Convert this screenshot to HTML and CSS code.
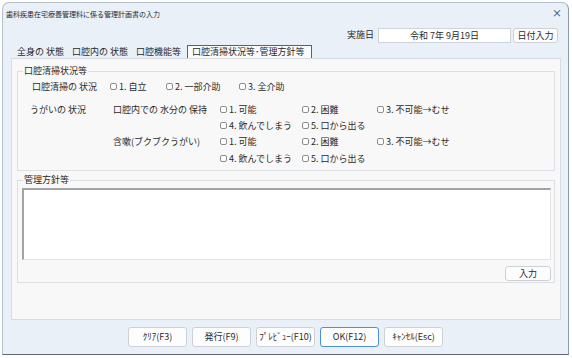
FILE: index.html
```html
<!DOCTYPE html>
<html lang="ja">
<head>
    <meta charset="UTF-8">
    <title>歯科疾患在宅療養管理料に係る管理計画書の入力</title>
    <link rel="stylesheet" href="styles.css">
</head>
<body>
    <div class="window">
        <div class="titlebar">
            <span class="title">歯科疾患在宅療養管理料に係る管理計画書の入力</span>
            <span class="close">×</span>
        </div>
        <div class="date-row">
            <span class="date-label">実施日</span>
            <div class="date-box">令和 7年 9月19日</div>
            <button class="btn date-btn">日付入力</button>
        </div>
        <div class="tabs">
            <span class="tab">全身の 状態</span>
            <span class="tab">口腔内の 状態</span>
            <span class="tab">口腔機能等</span>
            <span class="tab active">口腔清掃状況等･管理方針等</span>
        </div>
        <div class="panel">
            <fieldset class="group group-clean">
                <legend>口腔清掃状況等</legend>
                <div class="row-first">
                    <span class="row-label">口腔清掃の 状況</span>
                    <label class="opt w56"><span class="cb"></span>1. 自立</label>
                    <label class="opt w73"><span class="cb"></span>2. 一部介助</label>
                    <label class="opt"><span class="cb"></span>3. 全介助</label>
                </div>
                <div class="grid">
                    <span>うがいの 状況</span>
                    <span>口腔内での 水分の 保持</span>
                    <label class="opt"><span class="cb"></span>1. 可能</label>
                    <label class="opt"><span class="cb"></span>2. 困難</label>
                    <label class="opt"><span class="cb"></span>3. 不可能→むせ</label>

                    <label class="opt c3"><span class="cb"></span>4. 飲んでしまう</label>
                    <label class="opt"><span class="cb"></span>5. 口から出る</label>

                    <span class="c2">含嗽(ブクブクうがい)</span>
                    <label class="opt"><span class="cb"></span>1. 可能</label>
                    <label class="opt"><span class="cb"></span>2. 困難</label>
                    <label class="opt"><span class="cb"></span>3. 不可能→むせ</label>

                    <label class="opt c3"><span class="cb"></span>4. 飲んでしまう</label>
                    <label class="opt"><span class="cb"></span>5. 口から出る</label>
                </div>
            </fieldset>
            <fieldset class="group group-policy">
                <legend>管理方針等</legend>
                <textarea class="memo"></textarea>
                <div class="memo-actions">
                    <button class="btn input-btn">入力</button>
                </div>
            </fieldset>
        </div>
        <div class="footer">
            <button class="btn foot-btn">ｸﾘｱ(F3)</button>
            <button class="btn foot-btn">発行(F9)</button>
            <button class="btn foot-btn">ﾌﾟﾚﾋﾞｭｰ(F10)</button>
            <button class="btn foot-btn ok">OK(F12)</button>
            <button class="btn foot-btn">ｷｬﾝｾﾙ(Esc)</button>
        </div>
    </div>
</body>
</html>
```

FILE: styles.css
```css
body {
    margin: 0;
    background-color: #ffffff;
    font-family: "Noto Sans CJK JP", "Noto Sans", sans-serif;
    font-size: 9px;
    color: #2a2a2a;
}
.window {
    box-sizing: border-box;
    width: 567px;
    height: 353px;
    margin: 2px 0 0 2px;
    background-color: #e9f0f8;
    border: 1px solid #b4bfcb;
    border-bottom-color: #5c6470;
    border-right-color: #8f99a6;
    border-radius: 7px 7px 0 0;
    display: flex;
    flex-direction: column;
}
.titlebar {
    height: 22px;
    display: flex;
    align-items: center;
    justify-content: space-between;
    padding: 0 6px 0 3px;
}
.title {
    font-size: 7px;
    line-height: 10px;
}
.close {
    font-size: 10px;
    line-height: 10px;
    color: #333;
    margin-top: -3px;
}
.date-row {
    height: 16px;
    margin-top: 2px;
    display: flex;
    align-items: center;
    justify-content: flex-end;
    padding-right: 10px;
}
.date-label {
    margin-right: 4px;
    line-height: 14px;
}
.date-box {
    box-sizing: border-box;
    width: 133px;
    height: 15px;
    line-height: 13px;
    background-color: #ffffff;
    border: 1px solid #cfd4da;
    text-align: center;
}
.btn {
    font-family: "Noto Sans CJK JP", "Noto Sans", sans-serif;
    font-size: 9px;
    color: #2a2a2a;
    background-color: #fdfdfd;
    border: 1px solid #cdd0d4;
    border-radius: 3px;
    padding: 0;
    box-sizing: border-box;
}
.date-btn {
    width: 45px;
    height: 15px;
    line-height: 13px;
    margin-left: 2px;
}
.tabs {
    height: 13px;
    margin-top: 2px;
    display: flex;
    align-items: stretch;
    padding-left: 14px;
}
.tab {
    line-height: 13px;
    margin-right: 8px;
    white-space: nowrap;
}
.tab.active {
    box-sizing: border-box;
    border: 1px solid #606060;
    border-bottom: none;
    background-color: #fbfbfb;
    padding: 0 6px 0 4px;
    line-height: 12px;
    margin-left: -2px;
}
.panel {
    box-sizing: border-box;
    height: 262px;
    margin: 0 7px 0 8px;
    background-color: #f8f8f8;
    border: 1px solid #d7dce2;
    padding: 0 5px;
}
.group {
    margin: 0;
    border: 1px solid #dcdfe3;
    min-width: 0;
}
.group legend {
    padding: 0 1px;
    line-height: 12px;
}
.group-clean {
    margin-top: 6px;
    padding: 1px 4px 4px 12px;
}
.group-clean legend {
    margin-left: -7px;
}
.row-first {
    display: flex;
    align-items: center;
    height: 16px;
    padding-left: 2px;
}
.row-label {
    width: 78px;
}
.opt {
    display: flex;
    align-items: center;
    white-space: nowrap;
}
.w56 {
    width: 56px;
}
.w73 {
    width: 73px;
}
.cb {
    box-sizing: border-box;
    width: 7px;
    height: 7px;
    border: 1px solid #8c8c8c;
    border-radius: 2px;
    background-color: #fff;
    margin-right: 2px;
}
.grid {
    display: grid;
    grid-template-columns: 83px 107px 82px 75px auto;
    grid-template-rows: 16px 16px 17px 16px;
    align-items: center;
    margin-top: 7px;
}
.c2 {
    grid-column: 2;
}
.c3 {
    grid-column: 3;
}
.group-policy {
    margin-top: 3px;
    padding: 2px 3px 1px 4px;
}
.group-policy legend {
    margin-left: 1px;
}
.memo {
    display: block;
    box-sizing: border-box;
    width: 100%;
    height: 72px;
    margin: 0;
    background-color: #ffffff;
    border-style: solid;
    border-width: 2px 1px 1px 2px;
    border-color: #a3a3a3 #e6e6e6 #e6e6e6 #a3a3a3;
    resize: none;
}
.memo-actions {
    display: flex;
    justify-content: flex-end;
    margin-top: 6px;
}
.input-btn {
    width: 46px;
    height: 15px;
    line-height: 13px;
}
.footer {
    display: flex;
    justify-content: center;
    gap: 5px;
    padding-top: 7px;
}
.foot-btn {
    width: 59px;
    height: 20px;
    line-height: 18px;
}
.foot-btn.ok {
    border-color: #4d8fd8;
}
```
